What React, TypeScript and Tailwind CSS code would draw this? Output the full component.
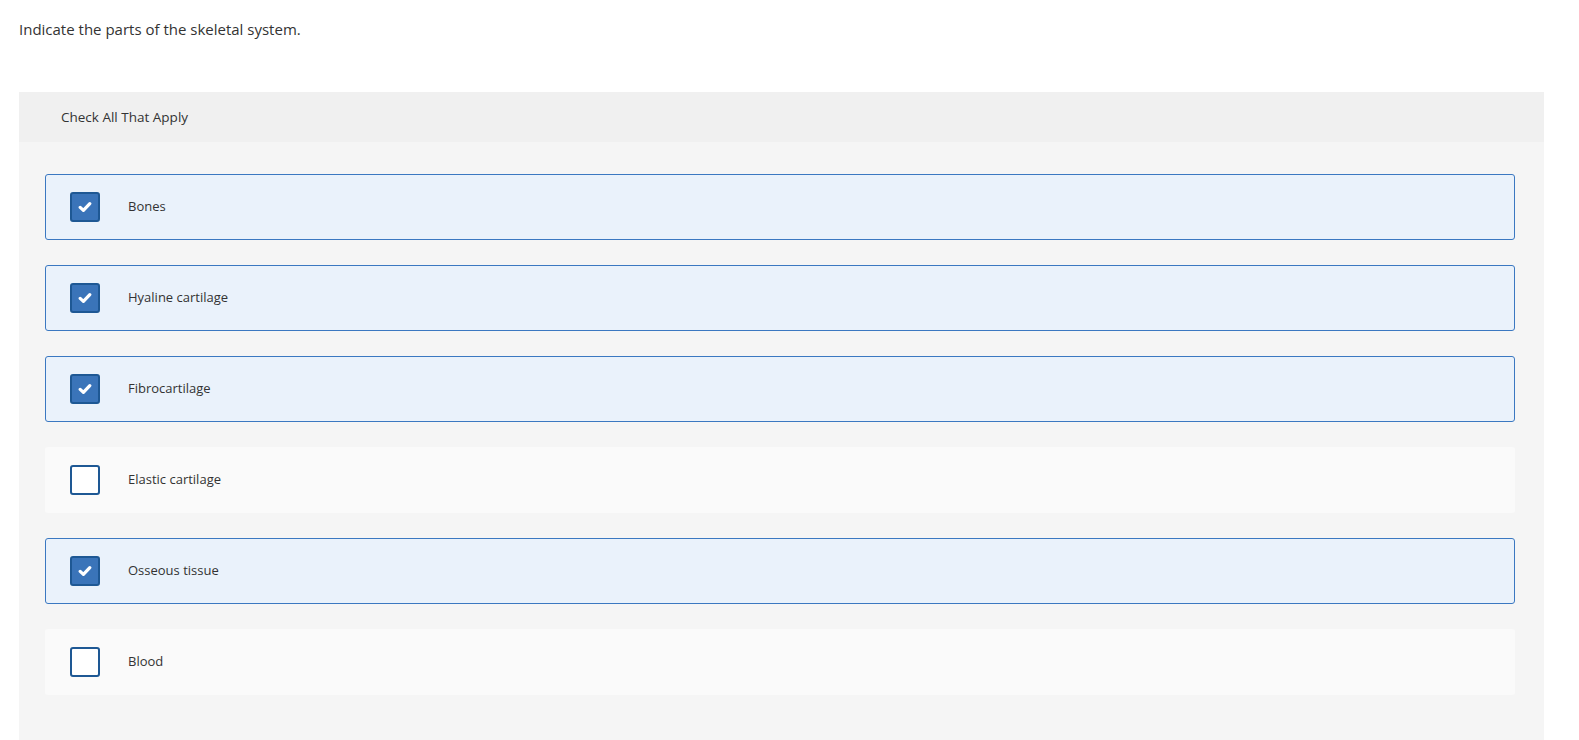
import React from 'react';

const options = [
  { label: 'Bones', checked: true },
  { label: 'Hyaline cartilage', checked: true },
  { label: 'Fibrocartilage', checked: true },
  { label: 'Elastic cartilage', checked: false },
  { label: 'Osseous tissue', checked: true },
  { label: 'Blood', checked: false },
];

const CheckMark = () => (
  <svg width="14" height="12" viewBox="0 0 14 12" fill="none">
    <path
      d="M2.2 6.4 L5.4 9.4 L11.8 2.6"
      stroke="white"
      strokeWidth="3.2"
      strokeLinecap="round"
      strokeLinejoin="round"
    />
  </svg>
);

export default function App() {
  return (
    <div className="h-screen overflow-hidden bg-white px-[19px] pt-[19px] font-['Open_Sans',sans-serif] text-[#333]">
      <p className="text-[15px] leading-[20px]">Indicate the parts of the skeletal system.</p>

      <div className="mt-[53px] w-[1525px] bg-[#f5f5f5]">
        <div className="flex h-[50px] items-center bg-[#f0f0f0] pl-[42px] text-[13.5px]">
          Check All That Apply
        </div>
        <div className="flex flex-col gap-[25px] pb-[50px] pl-[26px] pr-[29px] pt-[32px]">
          {options.map((opt) => (
            <label
              key={opt.label}
              className={`flex h-[66px] cursor-pointer items-center rounded-[3px] border ${
                opt.checked ? 'border-[#3b78c1] bg-[#eaf2fb]' : 'border-transparent bg-[#fafafa]'
              }`}
            >
              <span
                className={`ml-[24px] flex h-[30px] w-[30px] items-center justify-center rounded-[3px] border-2 border-[#1e5894] ${
                  opt.checked ? 'bg-[#3a74b9]' : 'bg-white'
                }`}
              >
                {opt.checked && <CheckMark />}
              </span>
              <span className="ml-[28px] text-[13px] text-[#333]">{opt.label}</span>
            </label>
          ))}
        </div>
      </div>
    </div>
  );
}
